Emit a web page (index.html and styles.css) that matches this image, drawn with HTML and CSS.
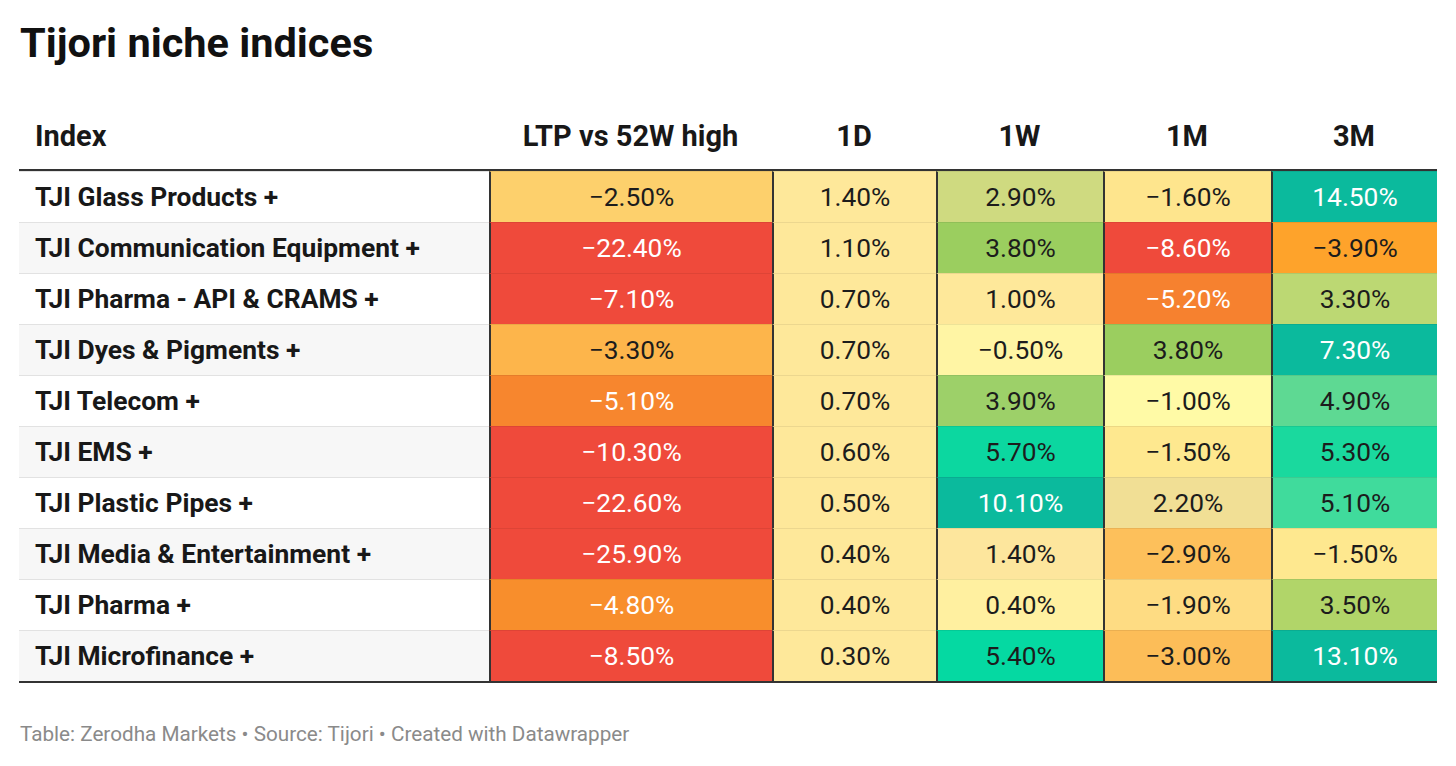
FILE: index.html
```html
<!DOCTYPE html>
<html>
<head>
<meta charset="utf-8">
<link rel="stylesheet" href="styles.css">
</head>
<body>
<div class="wrap">
  <h1 class="title">Tijori niche indices</h1>
  <div class="table">
    <div class="row head">
      <div class="c lab">Index</div>
      <div class="c">LTP vs 52W high</div>
      <div class="c">1D</div>
      <div class="c">1W</div>
      <div class="c">1M</div>
      <div class="c">3M</div>
    </div>
    <div class="row">
      <div class="c lab">TJI Glass Products +</div>
      <div class="c v" style="background:#fdd06c">−2.50%</div>
      <div class="c v" style="background:#fee89a">1.40%</div>
      <div class="c v" style="background:#cfda80">2.90%</div>
      <div class="c v" style="background:#fee58d">−1.60%</div>
      <div class="c v w" style="background:#0bba9d">14.50%</div>
    </div>
    <div class="row alt">
      <div class="c lab">TJI Communication Equipment +</div>
      <div class="c v w" style="background:#ef4a3b">−22.40%</div>
      <div class="c v" style="background:#fee89a">1.10%</div>
      <div class="c v" style="background:#9bce5f">3.80%</div>
      <div class="c v w" style="background:#ef4a3b">−8.60%</div>
      <div class="c v" style="background:#fea32b">−3.90%</div>
    </div>
    <div class="row">
      <div class="c lab">TJI Pharma - API &amp; CRAMS +</div>
      <div class="c v w" style="background:#ef4a3b">−7.10%</div>
      <div class="c v" style="background:#fee89a">0.70%</div>
      <div class="c v" style="background:#fee89a">1.00%</div>
      <div class="c v w" style="background:#f6812f">−5.20%</div>
      <div class="c v" style="background:#bcd873">3.30%</div>
    </div>
    <div class="row alt">
      <div class="c lab">TJI Dyes &amp; Pigments +</div>
      <div class="c v" style="background:#fdb54b">−3.30%</div>
      <div class="c v" style="background:#fee89a">0.70%</div>
      <div class="c v" style="background:#fff5a4">−0.50%</div>
      <div class="c v" style="background:#9bce5f">3.80%</div>
      <div class="c v w" style="background:#0bba9d">7.30%</div>
    </div>
    <div class="row">
      <div class="c lab">TJI Telecom +</div>
      <div class="c v w" style="background:#f7862e">−5.10%</div>
      <div class="c v" style="background:#fee89a">0.70%</div>
      <div class="c v" style="background:#9dd069">3.90%</div>
      <div class="c v" style="background:#fffaa6">−1.00%</div>
      <div class="c v" style="background:#5ed993">4.90%</div>
    </div>
    <div class="row alt">
      <div class="c lab">TJI EMS +</div>
      <div class="c v w" style="background:#ef4a3b">−10.30%</div>
      <div class="c v" style="background:#fee89a">0.60%</div>
      <div class="c v" style="background:#0cd7a0">5.70%</div>
      <div class="c v" style="background:#fee88f">−1.50%</div>
      <div class="c v" style="background:#1ad99e">5.30%</div>
    </div>
    <div class="row">
      <div class="c lab">TJI Plastic Pipes +</div>
      <div class="c v w" style="background:#ef4a3b">−22.60%</div>
      <div class="c v" style="background:#fee89a">0.50%</div>
      <div class="c v w" style="background:#0bba9d">10.10%</div>
      <div class="c v" style="background:#f1df95">2.20%</div>
      <div class="c v" style="background:#40db9c">5.10%</div>
    </div>
    <div class="row alt">
      <div class="c lab">TJI Media &amp; Entertainment +</div>
      <div class="c v w" style="background:#ef4a3b">−25.90%</div>
      <div class="c v" style="background:#fee89a">0.40%</div>
      <div class="c v" style="background:#fde69d">1.40%</div>
      <div class="c v" style="background:#fdc05b">−2.90%</div>
      <div class="c v" style="background:#fee88f">−1.50%</div>
    </div>
    <div class="row">
      <div class="c lab">TJI Pharma +</div>
      <div class="c v w" style="background:#f88e2c">−4.80%</div>
      <div class="c v" style="background:#fee89a">0.40%</div>
      <div class="c v" style="background:#fff0a0">0.40%</div>
      <div class="c v" style="background:#fedc83">−1.90%</div>
      <div class="c v" style="background:#b1d569">3.50%</div>
    </div>
    <div class="row alt last">
      <div class="c lab">TJI Microfinance +</div>
      <div class="c v w" style="background:#ef4a3b">−8.50%</div>
      <div class="c v" style="background:#fee89a">0.30%</div>
      <div class="c v" style="background:#05d9a2">5.40%</div>
      <div class="c v" style="background:#fcbd58">−3.00%</div>
      <div class="c v w" style="background:#0bba9d">13.10%</div>
    </div>
  </div>
  <div class="foot">Table: Zerodha Markets • Source: Tijori • Created with Datawrapper</div>
</div>
</body>
</html>
```

FILE: styles.css
```css
html, body {
  margin: 0;
  padding: 0;
  background: #ffffff;
}
body {
  font-family: Roboto, "Liberation Sans", sans-serif;
  color: #181818;
}
.wrap {
  padding: 21px 19px 0 19px;
}
.title {
  margin: 0;
  font-size: 41.5px;
  line-height: 44px;
  font-weight: 700;
  color: #111;
  padding-left: 1px;
}
.table {
  margin-top: 55px;
  width: 1418px;
  border-bottom: 2px solid #333;
}
.row {
  display: grid;
  grid-template-columns: 470px 283px 164px 167px 168px 166px;
  height: 51px;
}
.row.alt .lab {
  background: #f7f7f7;
}
.c {
  display: flex;
  align-items: center;
  justify-content: center;
  border-top: 1px solid rgba(0, 0, 0, 0.07);
}
.c.lab {
  justify-content: flex-start;
  padding-left: 16px;
  font-weight: 700;
  font-size: 26.4px;
  border-top-color: #e2e2e2;
}
.c.v {
  border-left: 2px solid #333;
  font-size: 26.3px;
  color: #1c1c1c;
}
.c.v.w {
  color: #ffffff;
}
.row.head {
  height: auto;
  border-bottom: 2px solid #333;
}
.row.head .c {
  border-top: none;
  font-size: 29px;
  font-weight: 700;
  line-height: 32px;
  padding-bottom: 17px;
  align-items: flex-end;
}
.foot {
  margin-top: 39px;
  font-size: 20.7px;
  color: #8a8a8a;
  padding-left: 1px;
}
```
